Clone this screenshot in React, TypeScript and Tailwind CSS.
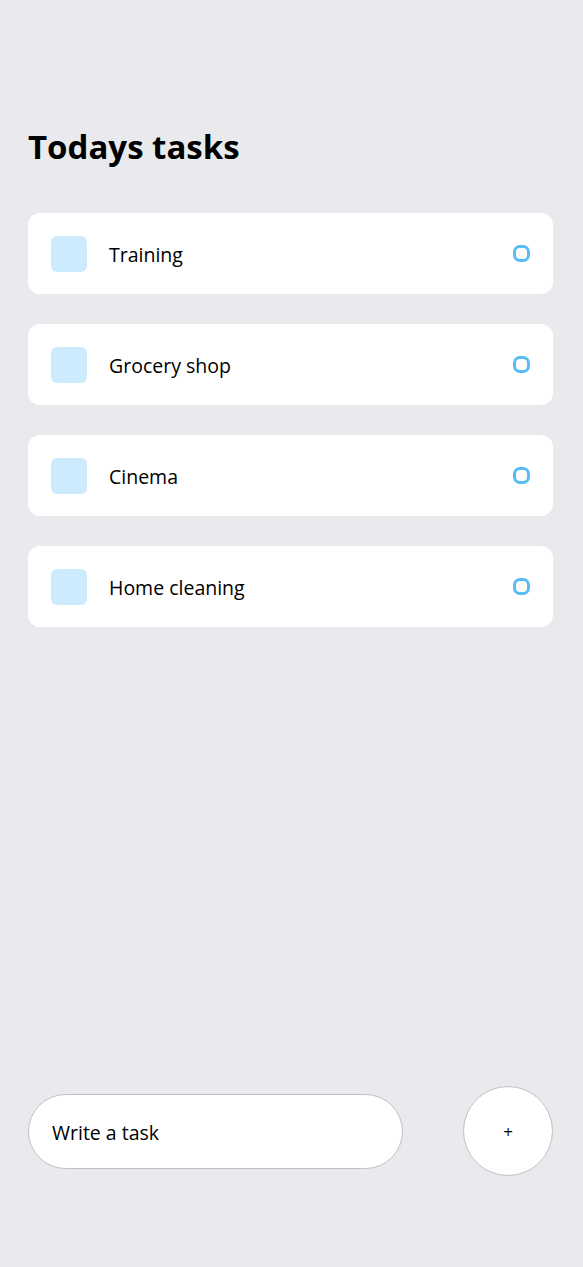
const tasks = ["Training", "Grocery shop", "Cinema", "Home cleaning"]

function Task({ text }: { text: string }) {
  return (
    <div className="flex h-[81px] items-center justify-between rounded-[12px] bg-white px-[23px]">
      <div className="flex items-center">
        <div className="h-[36px] w-[36px] rounded-[6px] bg-[#55BCF6]/30" />
        <p className="ml-[22px] mt-[3px] text-[19.5px] text-black">{text}</p>
      </div>
      <div className="h-[17px] w-[17px] rounded-[7px] border-[3px] border-[#55BCF6]" />
    </div>
  )
}

export default function App() {
  return (
    <div
      className="flex min-h-screen flex-col bg-[#E8EAED] pl-[28px] pr-[30px]"
      style={{ fontFamily: '"Open Sans", "Noto Sans", sans-serif' }}
    >
      <h1 className="pt-[127px] text-[33px] font-bold leading-[40px] text-black">Todays tasks</h1>

      <div className="mt-[46px] flex flex-col gap-[30px]">
        {tasks.map((t) => (
          <Task key={t} text={t} />
        ))}
      </div>

      <div className="mt-auto mb-[91px] flex items-center justify-between">
        <div className="flex h-[75px] w-[375px] items-center rounded-full border border-[#C0C0C0] bg-white px-[23px]">
          <span className="mt-[3px] text-[19.5px] text-black">Write a task</span>
        </div>
        <button className="flex h-[90px] w-[90px] items-center justify-center rounded-full border border-[#C0C0C0] bg-white pt-[2px] text-[17px] text-black">
          +
        </button>
      </div>
    </div>
  )
}
